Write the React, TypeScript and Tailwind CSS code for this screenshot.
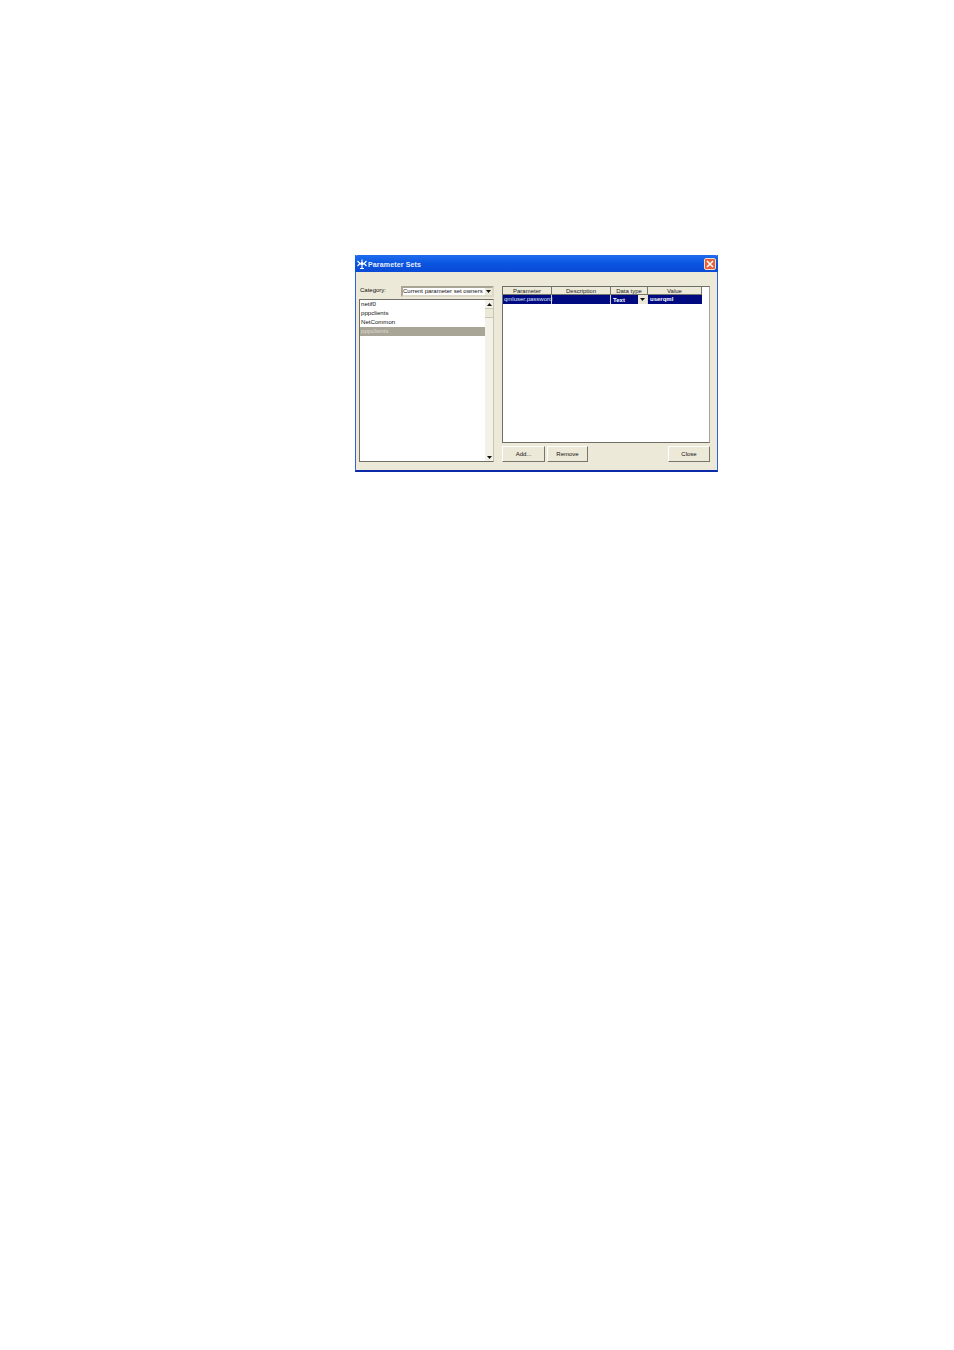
import React from "react";

const font = "font-['Liberation_Sans',Arial,sans-serif]";

const Arrow = ({ up = false }: { up?: boolean }) => (
  <svg width="5" height="3" viewBox="0 0 5 3" className="block">
    <path d={up ? "M2.5 0L5 3H0Z" : "M0 0H5L2.5 3Z"} fill="#111" />
  </svg>
);

const DialogIcon = () => (
  <svg width="10" height="10" viewBox="0 0 10 10" className="block">
    <path d="M5 0.5V9.5M3 9.5H7M0.5 2L3 4.5L0.5 7M9.5 2L7 4.5L9.5 7M2 5H8" stroke="#fff" strokeWidth="1.2" fill="none" />
    <circle cx="5" cy="4.5" r="1.6" fill="#fff" />
  </svg>
);

const Button = ({ label, width }: { label: string; width: string }) => (
  <button className={`${width} h-4 bg-[#ece9d8] border-t border-l border-t-white border-l-white border-b border-r border-b-[#77766c] border-r-[#77766c] text-[6px] text-[#111] flex items-center justify-center`}>
    {label}
  </button>
);

const headers = [
  { label: "Parameter", w: "w-[49px]" },
  { label: "Description", w: "w-[59px]" },
  { label: "Data type", w: "w-[37px]" },
  { label: "Value", w: "w-[54px]" },
];

const items = ["netif0", "pppclients", "NetCommon"];

export default function App() {
  return (
    <div className={`w-[954px] h-[1350px] bg-white pt-[255px] pl-[355px] ${font}`}>
      {/* Dialog */}
      <div className="w-[363px] h-[217px] bg-[#ece9d8] border border-t-0 border-[#2f62dc] border-b-2 border-b-[#0a2aa8] flex flex-col">
        {/* Title bar */}
        <div className="h-[17px] -mx-px bg-gradient-to-b from-[#1f6cf0] via-[#0a55e0] to-[#0a4ad6] rounded-t-[3px] flex items-center pl-[2px] pr-[2px]">
          <DialogIcon />
          <span className="ml-[1px] pt-[1px] text-[7px] font-bold text-[#e8eefc] leading-none tracking-[0.15px]">Parameter Sets</span>
          <div className="ml-auto w-[12px] h-[12px] rounded-[2px] bg-[#e2643c] border border-[#f3d8cc] flex items-center justify-center">
            <svg width="8" height="8" viewBox="0 0 8 8" className="block">
              <path d="M1 1L7 7M7 1L1 7" stroke="#fff" strokeWidth="1.5" />
            </svg>
          </div>
        </div>

        <div className="flex pt-[14px] pl-[3px] pr-[7px] gap-2">
          {/* Left column */}
          <div className="w-[135px] flex flex-col gap-[2px]">
            <div className="h-[11px] flex items-center">
              <span className="w-[42px] pl-[1px] text-[6px] leading-[9px] -mt-[2px] text-[#111]">Category:</span>
              <div className="flex-1 h-[11px] bg-white border-2 border-[#a9a596] border-b-[#dcd9c8] border-r-[#dcd9c8] flex items-center justify-between">
                <span className="text-[6px] leading-[6px] -mt-[1px] text-[#111] whitespace-nowrap">Current parameter set owners</span>
                <div className="w-[7px] h-[7px] bg-[#ece9d8] flex items-center justify-center">
                  <Arrow />
                </div>
              </div>
            </div>
            <div className="h-[163px] flex bg-white border border-[#6f7065] border-r-[#c9c6b6]">
              <div className="flex-1 min-w-0">
                {items.map((item) => (
                  <div key={item} className="h-[9px] leading-[8px] pl-[1px] text-[6.1px] text-[#111]">{item}</div>
                ))}
                <div className="h-[9px] leading-[8px] pl-[1px] text-[6.1px] text-[#dedbd0] bg-[#a9a596]">pppclients</div>
              </div>
              {/* Scrollbar */}
              <div className="w-[8px] bg-[#f4f2e8] flex flex-col justify-between">
                <div>
                  <div className="h-[8px] flex items-center justify-center"><Arrow up /></div>
                  <div className="h-[10px] bg-[#ece9d8] border-t border-b border-[#c9c6b6]" />
                </div>
                <div className="h-[8px] flex items-center justify-center"><Arrow /></div>
              </div>
            </div>
          </div>

          {/* Right column */}
          <div className="w-[208px] flex flex-col">
            <div className="h-[157px] bg-white border border-[#6f7065] border-r-[#a5a294]">
              <div className="flex h-[8px]">
                {headers.map((h) => (
                  <div key={h.label} className={`${h.w} shrink-0 bg-[#ece9d8] border-r border-b border-[#77766c] text-[6px] leading-[8px] text-center text-[#222] whitespace-nowrap`}>
                    {h.label}
                  </div>
                ))}
              </div>
              <div className="flex h-[9px] w-[199px] bg-[#000a80] text-white">
                <div className="w-[49px] shrink-0 border-r border-[#d8d8d8] text-[6px] leading-[8px] pl-[1px] text-[#dfe2f5] whitespace-nowrap">qmluser.password</div>
                <div className="w-[59px] shrink-0 border-r border-[#d8d8d8]" />
                <div className="w-[37px] shrink-0 flex items-center justify-between border-r border-[#d8d8d8] pl-[2px]">
                  <span className="text-[6px] font-bold leading-none">Text</span>
                  <div className="w-[9px] h-[9px] bg-[#ece9d8] flex items-center justify-center"><Arrow /></div>
                </div>
                <div className="flex-1 text-[6px] font-bold leading-[8px] pl-[2px]">userqml</div>
              </div>
            </div>
            <div className="flex mt-[3px]">
              <Button label="Add..." width="w-[43px]" />
              <div className="ml-[2px]"><Button label="Remove" width="w-[41px]" /></div>
              <div className="ml-auto"><Button label="Close" width="w-[42px]" /></div>
            </div>
          </div>
        </div>
      </div>
    </div>
  );
}
